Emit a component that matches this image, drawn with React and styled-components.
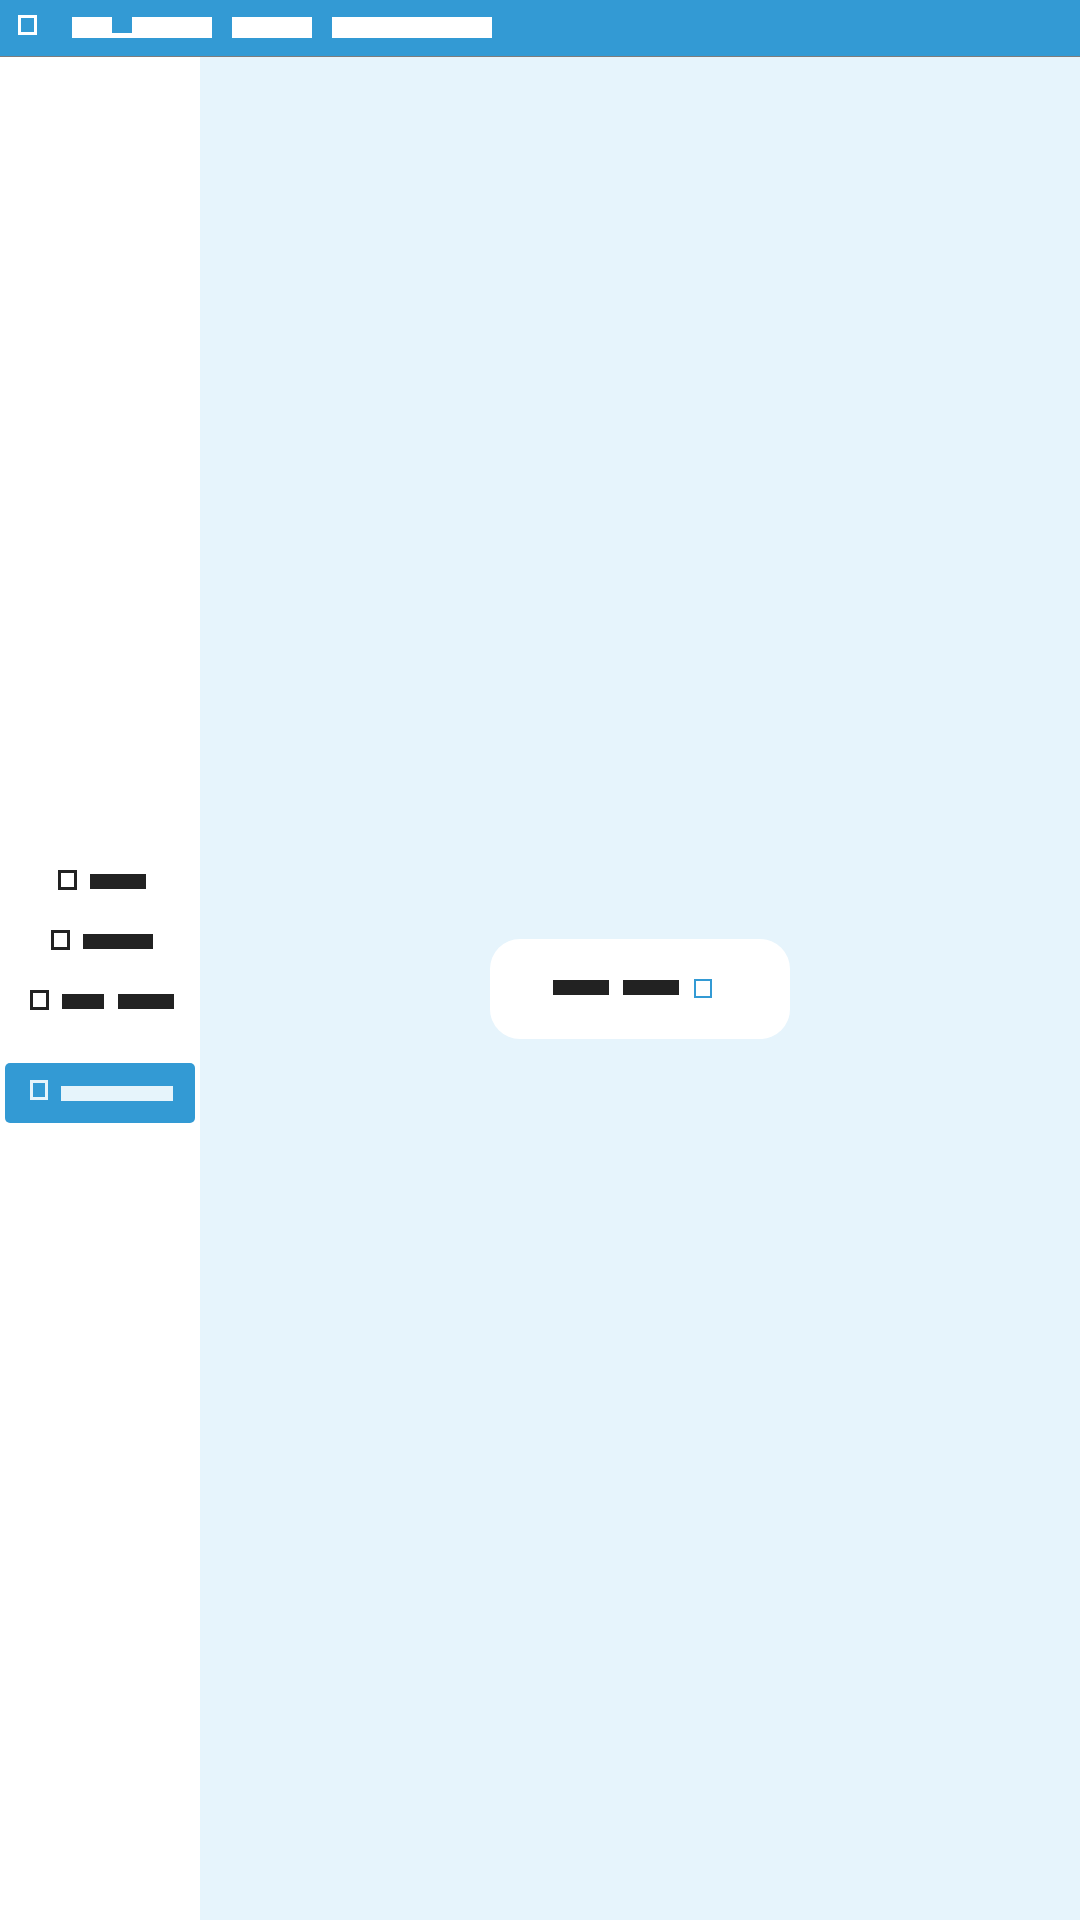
import React from 'react';
import styled, { createGlobalStyle } from 'styled-components';

const BLUE = '#339ad4';
const PALE = '#e6f4fc';
const INK = '#222222';

const GlobalStyle = createGlobalStyle`
  html, body {
    margin: 0;
    padding: 0;
    height: 100%;
  }
  body {
    font-family: "Noto Sans CJK SC", "Noto Sans", sans-serif;
    background: #fff;
  }
  #root {
    height: 100%;
  }
`;

// text drawn as solid blocks over the glyph em box, the way the screen shows it
const bandTop = p => Math.round(p.$size * 0.28 - 0.5);
const Block = styled.span`
  display: inline-block;
  font-size: ${p => p.$size}px;
  line-height: 1.448;
  font-family: "Noto Sans CJK SC", sans-serif;
  white-space: nowrap;
  color: transparent;
  background: ${p => {
    const top = p.$low ? bandTop(p) + p.$h - 5 : bandTop(p);
    const bottom = bandTop(p) + p.$h;
    return `linear-gradient(to bottom, transparent ${top}px, ${p.$color} ${top}px, ${p.$color} ${bottom}px, transparent ${bottom}px)`;
  }};
`;

const Tofu = styled.span`
  display: inline-block;
  box-sizing: border-box;
  flex: none;
  width: ${p => p.$w}px;
  height: ${p => p.$hh}px;
  border: ${p => p.$stroke}px solid ${p => p.$color};
`;

const Page = styled.div`
  display: flex;
  flex-direction: column;
  height: 100vh;
`;

const TopBar = styled.header`
  display: flex;
  align-items: center;
  height: 56px;
  padding-left: 18px;
  background: ${BLUE};
  border-bottom: 1px solid #7d7d7d;
  flex: none;
`;

const Logo = styled(Tofu)`
  margin-right: 35px;
  margin-bottom: 6px;
`;

const Title = styled.div`
  display: flex;
  margin: 0 20px 3px 0;
`;

const TopNav = styled.nav`
  display: flex;
  gap: 20px;
  margin-bottom: 3px;
`;

const Body = styled.div`
  flex: 1;
  display: flex;
  min-height: 0;
`;

const Sidebar = styled.aside`
  width: 200px;
  flex: none;
  background: #fff;
  display: flex;
  flex-direction: column;
  justify-content: center;
  padding-bottom: 4px;
  box-sizing: border-box;
`;

const NavRow = styled.div`
  height: 60px;
  display: flex;
  align-items: center;
  justify-content: center;
  gap: 13px;
  padding-left: 3px;
`;

const Words = styled.span`
  display: flex;
  gap: 14px;
  margin-top: ${p => p.$drop || 0}px;
  margin-bottom: ${p => p.$lift || 0}px;
`;

const ActionButton = styled.button`
  margin: 33px 5px 0;
  height: 60px;
  border: none;
  border-radius: 5px;
  background: ${BLUE};
  display: flex;
  align-items: center;
  justify-content: center;
  gap: 13px;
  padding: 0 0 0 3px;
  cursor: pointer;
`;

const ButtonIcon = styled(Tofu)`
  margin-bottom: 7px;
`;

const Main = styled.main`
  flex: 1;
  background: ${PALE};
  display: flex;
  align-items: center;
  justify-content: center;
`;

const Card = styled.div`
  width: 300px;
  height: 100px;
  box-sizing: border-box;
  border-radius: 30px;
  background: #fff;
  display: flex;
  align-items: center;
  justify-content: center;
  padding-right: 15px;
`;

const CardIcon = styled(Tofu)`
  margin-left: 15px;
`;

const sideItems = [
  { words: ['首页概览'] },
  { words: ['数据统计表'] },
  { words: ['消息中', '心设置项'] },
];

const SideText = ({ words }) => (
  <Words $drop={3}>
    {words.map(w => (
      <Block key={w} $size={14} $h={15} $color={INK}>{w}</Block>
    ))}
  </Words>
);

export default function App() {
  return (
    <>
      <GlobalStyle />
      <Page>
        <TopBar>
          <Logo $w={19} $hh={20} $stroke={3} $color="#fff" />
          <Title>
            <Block $size={20} $h={21} $color="#fff">智慧</Block>
            <Block $size={20} $h={21} $color="#fff" $low>，</Block>
            <Block $size={20} $h={21} $color="#fff">校园平台</Block>
          </Title>
          <TopNav>
            <Block $size={20} $h={21} $color="#fff">课程中心</Block>
            <Block $size={20} $h={21} $color="#fff">学习资源作业管理</Block>
          </TopNav>
        </TopBar>
        <Body>
          <Sidebar>
            {sideItems.map(item => (
              <NavRow key={item.words.join()}>
                <Tofu $w={19} $hh={20} $stroke={3} $color={INK} />
                <SideText words={item.words} />
              </NavRow>
            ))}
            <ActionButton type="button">
              <ButtonIcon $w={18} $hh={20} $stroke={3} $color="#e6f4fb" />
              <Words>
                <Block $size={14} $h={15} $color="#e6f4fb">新建学习任务计划</Block>
              </Words>
            </ActionButton>
          </Sidebar>
          <Main>
            <Card>
              <Words $lift={2}>
                <Block $size={14} $h={15} $color={INK}>正在加载</Block>
                <Block $size={14} $h={15} $color={INK}>请稍候哦</Block>
              </Words>
              <CardIcon $w={18} $hh={19} $stroke={2} $color={BLUE} />
            </Card>
          </Main>
        </Body>
      </Page>
    </>
  );
}
